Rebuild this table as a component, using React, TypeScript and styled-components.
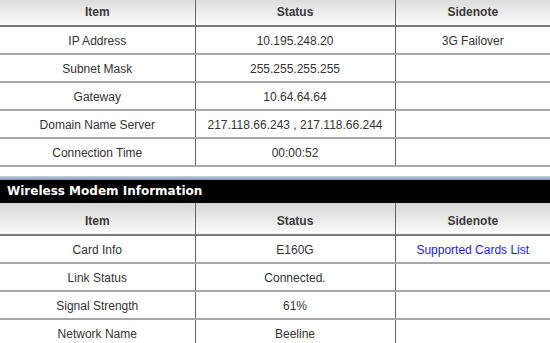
import React from "react";
import styled, { createGlobalStyle } from "styled-components";

const GlobalStyle = createGlobalStyle`
  html, body {
    margin: 0;
    padding: 0;
    background: #ffffff;
    overflow: hidden;
  }
`;

const Page = styled.div`
  margin-top: -6px;
  width: 550px;
  font-family: Tahoma, "Liberation Sans", Arial, sans-serif;
  font-size: 12px;
  color: #333333;
`;

const InfoTable = styled.table`
  width: 100%;
  border-collapse: collapse;
  table-layout: fixed;
`;

const HeadCell = styled.th`
  height: 32px;
  padding: 4px 0 0;
  box-sizing: border-box;
  font-weight: bold;
  font-size: 12px;
  color: #3a3a3a;
  text-align: center;
  background: linear-gradient(#d6d6d6, #fbfbfb);
  border-bottom: 2px solid #7a7a7a;
  border-left: 1px solid #666666;
  &:first-child {
    border-left: 0;
  }
`;

const Cell = styled.td`
  height: 24px;
  padding: 2px 0 0;
  text-align: center;
  border-bottom: 2px solid #a8a8a8;
  border-left: 1px solid #666666;
  &:first-child {
    border-left: 0;
  }
`;

const NoteLink = styled.a`
  color: #1a1aff;
  text-decoration: none;
`;

const SectionTitle = styled.div`
  margin-top: 9px;
  height: 25px;
  padding: 2px 0 0 7px;
  display: flex;
  align-items: center;
  background: linear-gradient(#c3d0e2 0, #8597b0 4px, #000000 4px);
  color: #ffffff;
  font-family: Verdana, "DejaVu Sans", sans-serif;
  font-weight: bold;
  font-size: 12px;
`;

interface Row {
  item: string;
  status: string;
  note?: string;
  link?: boolean;
}

const wanRows: Row[] = [
  { item: "IP Address", status: "10.195.248.20", note: "3G Failover" },
  { item: "Subnet Mask", status: "255.255.255.255" },
  { item: "Gateway", status: "10.64.64.64" },
  { item: "Domain Name Server", status: "217.118.66.243 , 217.118.66.244" },
  { item: "Connection Time", status: "00:00:52" },
];

const modemRows: Row[] = [
  { item: "Card Info", status: "E160G", note: "Supported Cards List", link: true },
  { item: "Link Status", status: "Connected." },
  { item: "Signal Strength", status: "61%" },
  { item: "Network Name", status: "Beeline" },
];

const StatusTable = ({ rows }: { rows: Row[] }) => (
  <InfoTable>
    <colgroup>
      <col style={{ width: 195 }} />
      <col style={{ width: 200 }} />
      <col />
    </colgroup>
    <thead>
      <tr>
        <HeadCell>Item</HeadCell>
        <HeadCell>Status</HeadCell>
        <HeadCell>Sidenote</HeadCell>
      </tr>
    </thead>
    <tbody>
      {rows.map((r) => (
        <tr key={r.item}>
          <Cell>{r.item}</Cell>
          <Cell>{r.status}</Cell>
          <Cell>
            {r.link ? <NoteLink href="#">{r.note}</NoteLink> : r.note}
          </Cell>
        </tr>
      ))}
    </tbody>
  </InfoTable>
);

export default function App() {
  return (
    <Page>
      <GlobalStyle />
      <StatusTable rows={wanRows} />
      <SectionTitle>Wireless Modem Information</SectionTitle>
      <StatusTable rows={modemRows} />
    </Page>
  );
}
